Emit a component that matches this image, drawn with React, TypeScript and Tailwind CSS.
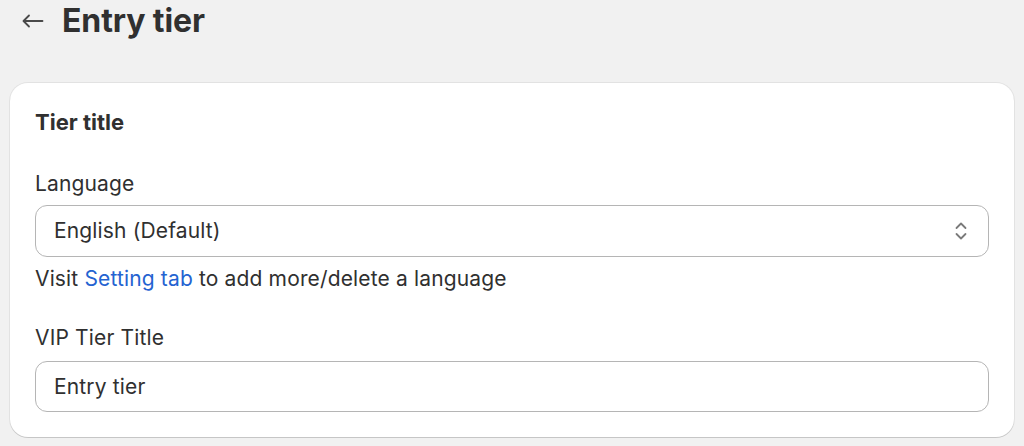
export default function App() {
  return (
    <div className="h-[446px] overflow-hidden bg-[#f1f1f1] font-['Inter',sans-serif] text-[#303030]">
      {/* Page header */}
      <div className="flex h-[42px] items-center pl-[21px]">
        <button className="flex h-[24px] w-[24px] items-center justify-center text-[#4a4a4a]">
          <svg width="22" height="14" viewBox="0 0 22 14" fill="none" stroke="currentColor" strokeWidth="1.8" strokeLinecap="round" strokeLinejoin="round">
            <path d="M20.5 7H1.8" />
            <path d="M7 1.5L1.5 7L7 12.5" />
          </svg>
        </button>
        <h1 className="ml-[17px] text-[32px] leading-[40px] font-bold tracking-[-0.1px]">Entry tier</h1>
      </div>

      {/* Card */}
      <div className="mx-[10px] mt-[41px] rounded-[18px] bg-white p-[25px] shadow-[0_1px_0_0_rgba(0,0,0,0.12),0_0_0_1px_rgba(0,0,0,0.06)]">
        <h2 className="text-[22px] leading-[28px] font-bold">Tier title</h2>

        <div className="mt-[34px] text-[21px] leading-[28px] tracking-[0.15px]">
          <label className="block">Language</label>
          <div className="mt-[7px] flex h-[52px] items-center justify-between rounded-[12px] border border-[#b5b5b5] pr-[20px] pl-[18px]">
            <span>English (Default)</span>
            <svg width="14" height="20" viewBox="0 0 14 20" fill="none" stroke="#7a7a7a" strokeWidth="1.8" strokeLinecap="round" strokeLinejoin="round">
              <path d="M2.5 7L7 2.5L11.5 7" />
              <path d="M2.5 13L7 17.5L11.5 13" />
            </svg>
          </div>
          <p className="mt-[8px]">
            Visit <a className="text-[#2463d1]">Setting tab</a> to add more/delete a language
          </p>
        </div>

        <div className="mt-[31px] text-[21px] leading-[28px] tracking-[0.15px]">
          <label className="block">VIP Tier Title</label>
          <div className="mt-[9px] flex h-[51px] items-center rounded-[12px] border border-[#b5b5b5] pl-[18px]">
            <span>Entry tier</span>
          </div>
        </div>
      </div>
    </div>
  );
}
